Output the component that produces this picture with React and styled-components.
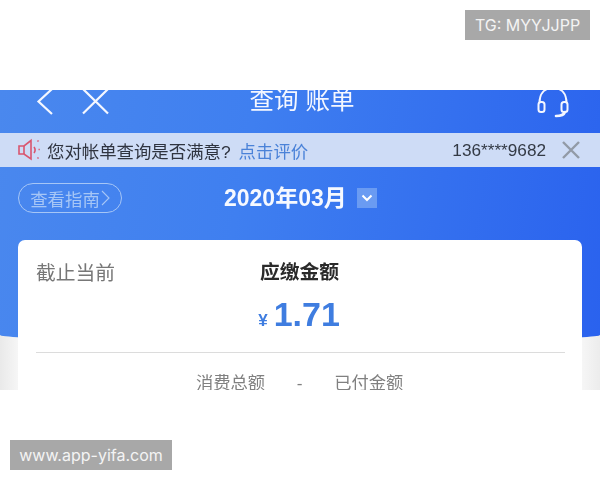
import React from "react";
import styled, { createGlobalStyle } from "styled-components";

const GlobalStyle = createGlobalStyle`
  html, body {
    margin: 0;
    padding: 0;
    background: #ffffff;
    font-family: "Liberation Sans", "Noto Sans CJK SC", sans-serif;
  }
`;

const Page = styled.div`
  position: relative;
  width: 600px;
  height: 480px;
  padding-top: 90px;
  box-sizing: border-box;
  overflow: hidden;
  background: #ffffff;
`;

const Watermark = styled.div`
  position: absolute;
  ${({ $corner }) => ($corner === "top" ? "top: 10px; right: 10px;" : "bottom: 10px; left: 10px;")}
  width: ${({ $width }) => $width}px;
  height: 30px;
  display: flex;
  align-items: center;
  justify-content: center;
  background: #a8a8a8;
  color: #f4f4f4;
  font-family: "Inter", "Liberation Sans", sans-serif;
  font-size: 16px;
`;

const Screen = styled.div`
  position: relative;
  height: 300px;
  overflow: hidden;
  background: linear-gradient(90deg, #e9e9e9 0, #f6f6f6 18px, #f6f6f6 582px, #ececec 100%);
  filter: blur(0.35px);
`;

const Hero = styled.div`
  position: absolute;
  top: 0;
  left: 0;
  right: 0;
  height: 252px;
  background: linear-gradient(100deg, #4a88ee 0%, #3f7ff0 40%, #2a62ee 100%);
  border-radius: 0 0 50% 50% / 0 0 7px 7px;
`;

const Content = styled.div`
  position: relative;
  display: flex;
  flex-direction: column;
`;

const NavBar = styled.div`
  height: 43px;
  display: grid;
  grid-template-columns: 1fr auto 1fr;
  align-items: start;
  padding: 0 31px 0 35px;
`;

const NavIcons = styled.div`
  display: flex;
  gap: 26px;
  justify-self: ${({ $end }) => ($end ? "end" : "start")};
`;

const NavTitle = styled.div`
  margin-top: -6px;
  color: #f4f7ff;
  font-size: 24.5px;
  line-height: 34px;
  white-space: pre;
`;

const Notice = styled.div`
  height: 34px;
  display: flex;
  align-items: center;
  padding: 0 19px 0 17px;
  background: #cedcf6;
  font-size: 17.4px;
  color: #2f3440;
`;

const NoticeText = styled.span`
  margin-left: 6px;
`;

const NoticeLink = styled.span`
  margin-left: 8px;
  color: #4a82d8;
`;

const Phone = styled.span`
  margin-left: auto;
  margin-right: 15px;
  font-size: 17.2px;
  color: #333a45;
`;

const MonthRow = styled.div`
  height: 73px;
  box-sizing: border-box;
  display: flex;
  align-items: flex-start;
  padding: 16px 0 0 18px;
`;

const GuideButton = styled.div`
  width: 104px;
  height: 30px;
  box-sizing: border-box;
  display: flex;
  align-items: center;
  justify-content: center;
  gap: 1px;
  border: 1px solid #a6c6f6;
  border-radius: 15px;
  color: #a6c6f6;
  font-size: 17.4px;
`;

const Month = styled.div`
  margin-left: 102px;
  color: #f6f9ff;
  font-size: 23px;
  line-height: 30px;
  font-weight: 700;
`;

const MonthToggle = styled.div`
  width: 20px;
  height: 20px;
  margin: 5px 0 0 10px;
  display: flex;
  align-items: center;
  justify-content: center;
  background: #6a9bf2;
`;

const Card = styled.div`
  margin: 0 18px;
  height: 160px;
  padding: 0 17px 0 18px;
  background: #ffffff;
  border-radius: 7px 7px 0 0;
`;

const Summary = styled.div`
  position: relative;
  height: 113px;
  box-sizing: border-box;
  display: flex;
  flex-direction: column;
  align-items: center;
  border-bottom: 1px solid #dcdcdc;
`;

const Since = styled.div`
  position: absolute;
  top: 19px;
  left: 0;
  color: #777777;
  font-size: 19.8px;
  line-height: 29px;
`;

const DueLabel = styled.div`
  margin-top: 18px;
  margin-left: -2px;
  color: #2a2a2a;
  font-size: 19.8px;
  line-height: 29px;
  font-weight: 700;
`;

const Amount = styled.div`
  margin-top: 6px;
  margin-left: -3px;
  display: flex;
  align-items: baseline;
  gap: 6px;
  color: #3f7de0;
`;

const Currency = styled.span`
  font-size: 17px;
  font-weight: 700;
`;

const AmountValue = styled.span`
  font-size: 34px;
  line-height: 42px;
  font-weight: 700;
`;

const Totals = styled.div`
  margin-top: 17px;
  padding-left: 160px;
  display: flex;
  color: #808080;
  font-size: 17.3px;
  line-height: 26px;
`;

const Dash = styled.span`
  width: 69px;
  text-align: center;
`;

const Glyph = styled.svg`
  display: block;
`;

const BackIcon = () => (
  <Glyph width="20" height="28" viewBox="0 0 20 28" fill="none" stroke="#f4f7ff" strokeWidth="2.2">
    <path d="M17 -1 L3.5 11.5 L17 24" />
  </Glyph>
);

const CloseIcon = () => (
  <Glyph width="30" height="28" viewBox="0 0 30 28" fill="none" stroke="#f4f7ff" strokeWidth="2.2">
    <path d="M2 -1 L27 23.5 M27 -1 L2 23.5" />
  </Glyph>
);

const HeadsetIcon = () => (
  <Glyph width="32" height="28" viewBox="0 0 32 28" fill="none" stroke="#f4f7ff" strokeWidth="2">
    <path d="M2.5 13 C2.5 4 7 -2 16 -2 C25 -2 29.5 4 29.5 13" />
    <rect x="1.5" y="12" width="6" height="10" rx="2.5" />
    <rect x="24.5" y="12" width="6" height="10" rx="2.5" />
    <path d="M28 22 C27 25 24 26 19 26" strokeWidth="2.6" strokeLinecap="round" />
  </Glyph>
);

const SpeakerIcon = () => (
  <Glyph width="24" height="24" viewBox="0 0 24 24" fill="none" stroke="#d9566f" strokeWidth="1.6">
    <path d="M2 8 H7 L14 2.5 V21 L7 16 H2 Z" />
    <path d="M7 8 V16" />
    <path d="M17 9 C18.5 11 18.5 13 17 15" />
    <path d="M20.5 2.5 L21.5 3.5 M21.5 11.5 H22.8 M20.5 20.5 L21.5 19.5" />
  </Glyph>
);

const DismissIcon = () => (
  <Glyph width="20" height="20" viewBox="0 0 20 20" fill="none" stroke="#929aa6" strokeWidth="2.4">
    <path d="M2 2 L18 18 M18 2 L2 18" />
  </Glyph>
);

const GuideArrow = () => (
  <Glyph width="9" height="18" viewBox="0 0 9 18" fill="none" stroke="#a6c6f6" strokeWidth="1.1">
    <path d="M1 2 L8 9 L1 16" />
  </Glyph>
);

const ToggleArrow = () => (
  <Glyph width="12" height="8" viewBox="0 0 12 8" fill="none" stroke="#ffffff" strokeWidth="2">
    <path d="M1.5 1.5 L6 6 L10.5 1.5" />
  </Glyph>
);

export default function App() {
  return (
    <Page>
      <GlobalStyle />
      <Screen>
        <Hero />
        <Content>
          <NavBar>
            <NavIcons>
              <BackIcon />
              <CloseIcon />
            </NavIcons>
            <NavTitle>查询 账单</NavTitle>
            <NavIcons $end>
              <HeadsetIcon />
            </NavIcons>
          </NavBar>
          <Notice>
            <SpeakerIcon />
            <NoticeText>您对帐单查询是否满意?</NoticeText>
            <NoticeLink>点击评价</NoticeLink>
            <Phone>136****9682</Phone>
            <DismissIcon />
          </Notice>
          <MonthRow>
            <GuideButton>
              查看指南
              <GuideArrow />
            </GuideButton>
            <Month>2020年03月</Month>
            <MonthToggle>
              <ToggleArrow />
            </MonthToggle>
          </MonthRow>
          <Card>
            <Summary>
              <Since>截止当前</Since>
              <DueLabel>应缴金额</DueLabel>
              <Amount>
                <Currency>¥</Currency>
                <AmountValue>1.71</AmountValue>
              </Amount>
            </Summary>
            <Totals>
              <span>消费总额</span>
              <Dash>-</Dash>
              <span>已付金额</span>
            </Totals>
          </Card>
        </Content>
      </Screen>
      <Watermark $corner="top" $width={125}>TG: MYYJJPP</Watermark>
      <Watermark $corner="bottom" $width={162}>www.app-yifa.com</Watermark>
    </Page>
  );
}
